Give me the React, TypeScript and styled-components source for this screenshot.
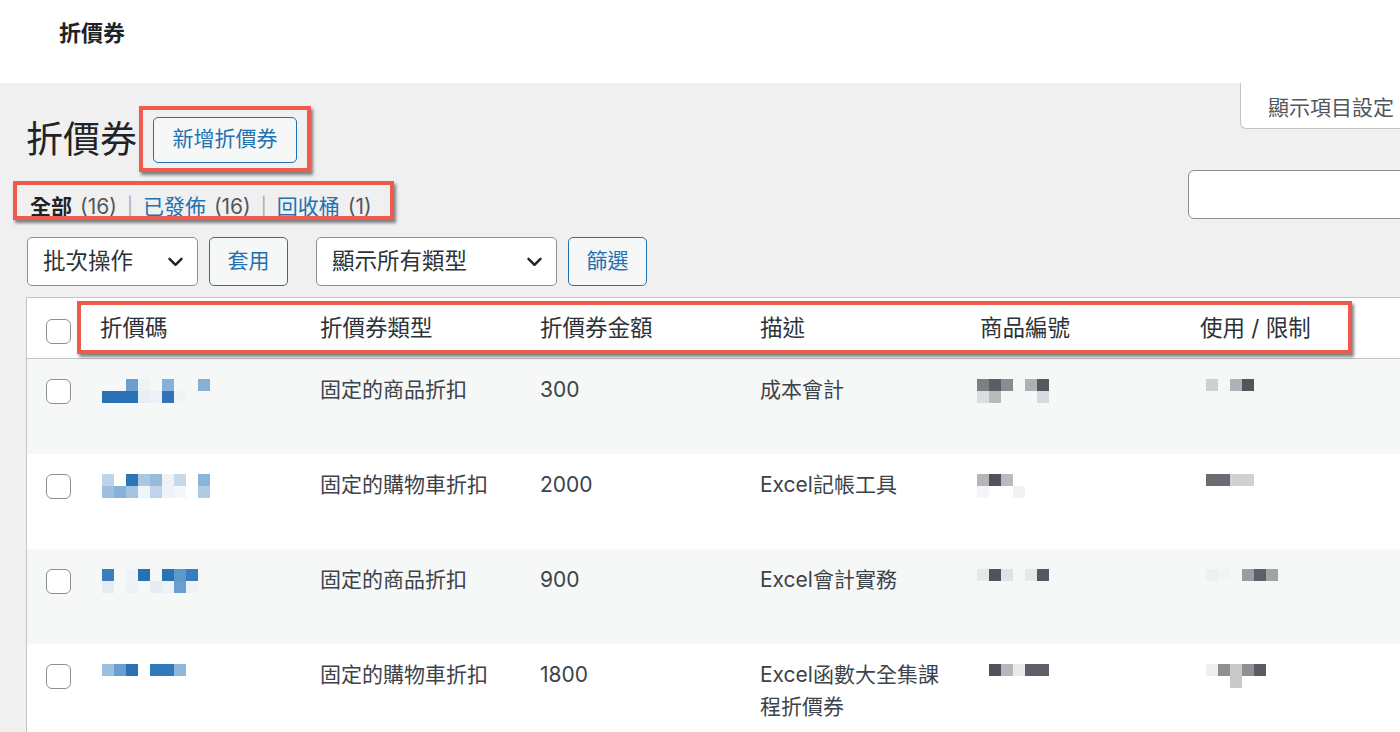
import React from "react";
import styled, { createGlobalStyle } from "styled-components";

const GlobalStyle = createGlobalStyle`
  html, body { margin: 0; padding: 0; }
  body {
    background: #f0f0f1;
    font-family: Inter, "Noto Sans CJK TC", "Noto Sans", sans-serif;
    color: #3c434a;
    overflow: hidden;
  }
  * { box-sizing: border-box; }
`;

const Page = styled.div`
  width: 1400px;
  height: 732px;
  overflow: hidden;
`;

const TopBar = styled.header`
  height: 83px;
  background: #fff;
  padding: 19px 0 0 59px;
`;

const TopTitle = styled.h2`
  margin: 0;
  font-size: 22px;
  line-height: 28px;
  font-weight: 700;
  color: #1d2327;
`;

const Main = styled.main`
  padding-left: 26px;
`;

const HeadArea = styled.div`
  display: flex;
  justify-content: space-between;
`;

const LeftCol = styled.div`
  padding-top: 34px;
  display: flex;
  flex-direction: column;
  align-items: flex-start;
`;

const RightCol = styled.div`
  display: flex;
  flex-direction: column;
  align-items: flex-end;
  margin-right: -40px;
  gap: 41px;
`;

const TitleRow = styled.div`
  display: flex;
  align-items: center;
  gap: 16px;
  height: 46px;
`;

const PageTitle = styled.h1`
  margin: 0;
  font-size: 37px;
  line-height: 46px;
  font-weight: 400;
  color: #1d2327;
`;

const Annotated = styled.div`
  position: relative;
  display: inline-flex;
`;

const Mark = styled.span<{ $t: number; $r: number; $b: number; $l: number }>`
  position: absolute;
  top: ${(p) => p.$t}px;
  right: ${(p) => p.$r}px;
  bottom: ${(p) => p.$b}px;
  left: ${(p) => p.$l}px;
  border: 4px solid #ee5a4e;
  box-shadow: 2px 3px 3px rgba(30, 30, 30, 0.55);
  pointer-events: none;
`;

const HeaderMark = styled.span`
  position: absolute;
  top: 4px;
  left: 51px;
  width: 1275px;
  height: 53px;
  border: 4px solid #ee5a4e;
  box-shadow: 2px 3px 3px rgba(30, 30, 30, 0.55);
  pointer-events: none;
`;

const Button = styled.button<{ $w: number; $h?: number }>`
  width: ${(p) => p.$w}px;
  height: ${(p) => p.$h ?? 49}px;
  border: 1px solid #2271b1;
  border-radius: 5px;
  background: #f6f7f7;
  color: #2271b1;
  font-family: inherit;
  font-size: 21px;
  line-height: 28px;
  padding: 0 0 2px;
  cursor: pointer;
`;

const SubSub = styled.ul`
  margin: 0;
  padding: 0;
  list-style: none;
  display: flex;
  align-items: center;
  font-size: 21px;
  line-height: 30px;
  color: #50575e;
`;

const SubItem = styled.li<{ $current?: boolean }>`
  display: flex;
  gap: 8px;
  white-space: nowrap;
  & > span:first-child {
    color: ${(p) => (p.$current ? "#1d2327" : "#2271b1")};
    font-weight: ${(p) => (p.$current ? 700 : 400)};
  }
`;

const Sep = styled.span`
  color: #a7aaad;
  padding: 0 10px;
  font-size: 18px;
`;

const ScreenTab = styled.div`
  width: 200px;
  height: 46px;
  background: #fff;
  border: 1px solid #c3c4c7;
  border-top: none;
  border-radius: 0 0 0 6px;
  padding-left: 27px;
  display: flex;
  align-items: center;
  font-size: 21px;
  color: #50575e;
`;

const SearchBox = styled.div`
  width: 252px;
  height: 49px;
  border: 1px solid #8c8f94;
  border-radius: 6px;
  background: #fff;
`;

const TableNav = styled.div`
  display: flex;
  align-items: center;
  margin-top: 15px;
  margin-left: 1px;
  height: 49px;
`;

const NavGroup = styled.div<{ $mr: number }>`
  display: flex;
  gap: 11px;
  margin-right: ${(p) => p.$mr}px;
`;

const SelectBox = styled.div<{ $w: number }>`
  width: ${(p) => p.$w}px;
  height: 49px;
  border: 1px solid #8c8f94;
  border-radius: 5px;
  background: #fff;
  display: flex;
  align-items: center;
  justify-content: space-between;
  padding: 0 14px 0 15px;
  font-size: 22.5px;
  color: #2c3338;
  & > span {
    padding-bottom: 5px;
  }
`;

const Chevron = () => (
  <svg width="15" height="10" viewBox="0 0 15 10" fill="none">
    <path d="M1.5 1.8 L7.5 7.8 L13.5 1.8" stroke="#1d2327" strokeWidth="2.4" strokeLinecap="round" strokeLinejoin="round" />
  </svg>
);

const TableWrap = styled.div`
  position: relative;
  margin-top: 11px;
`;

const Table = styled.table`
  border-collapse: separate;
  border-spacing: 0;
  table-layout: fixed;
  width: 1378px;
  border-left: 1px solid #c3c4c7;
  border-top: 1px solid #c3c4c7;
  background: #fff;
`;

const Th = styled.th<{ $check?: boolean }>`
  text-align: left;
  font-weight: 400;
  font-size: 22.5px;
  line-height: 32px;
  color: #2c3338;
  padding: ${(p) => (p.$check ? "21px 0 0 19px" : "14px 16px")};
  width: ${(p) => (p.$check ? "57px" : "220px")};
  height: 60px;
  border-bottom: 1px solid #c3c4c7;
  vertical-align: top;
  white-space: nowrap;
`;

const Row = styled.tr`
  height: 95px;
  &:nth-child(odd) {
    background: #f6f7f7;
  }
`;

const Td = styled.td<{ $check?: boolean }>`
  vertical-align: top;
  padding: ${(p) => (p.$check ? "20px 0 0 19px" : "15px 16px 11px")};
  font-size: 21px;
  line-height: 32px;
  color: #3c434a;
`;

const CheckBox = styled.span`
  display: block;
  width: 25px;
  height: 25px;
  border: 1px solid #8c8f94;
  border-radius: 6px;
  background: #fff;
`;

const MosaicHolder = styled.div<{ $dx: number; $dy: number }>`
  margin: ${(p) => p.$dy}px 0 0 ${(p) => p.$dx}px;
  line-height: 0;
`;

type Grid = string[][];

const Mosaic = ({ grid, dx, dy = 5 }: { grid: Grid; dx: number; dy?: number }) => {
  const cols = Math.max(...grid.map((r) => r.length));
  return (
    <MosaicHolder $dx={dx} $dy={dy}>
      <svg width={cols * 12} height={grid.length * 12}>
        {grid.map((r, y) =>
          r.map((c, x) => (c ? <rect key={`${x}-${y}`} x={x * 12} y={y * 12} width="12" height="12" fill={c} /> : null))
        )}
      </svg>
    </MosaicHolder>
  );
};

type RowData = {
  code: Grid;
  type: string;
  amount: string;
  desc: string;
  product: Grid;
  productDx: number;
  usage: Grid;
};

const rows: RowData[] = [
  {
    code: [
      ["", "", "#6a9fd0", "#eef3f8", "", "#86b2da", "", "", "#88b1d8"],
      ["#2a70b4", "#2a70b4", "#2a70b4", "#e8eef6", "#edf2f7", "#2f74b5", "#f0f4f8", "", ""],
    ],
    type: "固定的商品折扣",
    amount: "300",
    desc: "成本會計",
    product: [
      ["#7d7f85", "#5a5d66", "#8a8c90", "", "#aeb0b3", "#55585f"],
      ["#dcdde0", "#b8bbbe", "", "", "", "#d8dadd"],
    ],
    productDx: -3,
    usage: [["#cfd0d2", "", "#b0b2b6", "#52545e"]],
  },
  {
    code: [
      ["#bcd3e8", "", "#2f74b5", "#a9c6e2", "#98bbdd", "#eef3f8", "#c6d8ea", "", "#8cb4da"],
      ["#9ec0df", "#86b1d8", "#a3c3e1", "#f0f5fa", "#bdd4ea", "#eef3f9", "#f3f7fa", "", "#b1cbe5"],
    ],
    type: "固定的購物車折扣",
    amount: "2000",
    desc: "Excel記帳工具",
    product: [
      ["#b3b5b8", "#50535c", "#b9bbbe"],
      ["#f4f5f7", "", "", "#f2f3f4"],
    ],
    productDx: -3,
    usage: [["#6a6c72", "#6a6c72", "#d0d1d3", "#d0d1d3"]],
  },
  {
    code: [
      ["#3b7dbd", "", "#eef3f8", "#2870b4", "", "#2b72b5", "#5f97cc", "#3a7cbd"],
      ["#e4ebf3", "", "#eef2f6", "", "#e6ecf3", "#eef3f8", "#6a9ed0", "#f0f3f6"],
    ],
    type: "固定的商品折扣",
    amount: "900",
    desc: "Excel會計實務",
    product: [["#e6e7e8", "#50535b", "#e1e2e3", "", "#e6e7e8", "#555860"]],
    productDx: -3,
    usage: [["#eeeff0", "#f3f4f5", "", "#9a9c9f", "#5c5f66", "#a0a2a5"]],
  },
  {
    code: [["#9dbfe0", "#6a9ed0", "#2a70b4", "", "#3079bd", "#3079bd", "#8fb6dc"]],
    type: "固定的購物車折扣",
    amount: "1800",
    desc: "Excel函數大全集課程折價券",
    product: [["", "#50535b", "#b5b7bb", "#e8e9ea", "#5d6068", "#5d6068"]],
    productDx: -3,
    usage: [
      ["#eeeff0", "#8e9094", "#c8c9cb", "#8e9094", "#595c63"],
      ["", "", "#c8c9cb", "", ""],
    ],
  },
];

const columns = ["折價碼", "折價券類型", "折價券金額", "描述", "商品編號", "使用 / 限制"];

export default function App() {
  return (
    <Page>
      <GlobalStyle />
      <TopBar>
        <TopTitle>折價券</TopTitle>
      </TopBar>
      <Main>
        <HeadArea>
          <LeftCol>
            <TitleRow>
              <PageTitle>折價券</PageTitle>
              <Annotated>
                <Button $w={144} $h={46}>新增折價券</Button>
                <Mark $t={-11} $r={-14} $b={-9} $l={-14} />
              </Annotated>
            </TitleRow>
            <Annotated style={{ marginTop: 29, marginLeft: 4 }}>
              <SubSub>
                <SubItem $current>
                  <span>全部</span>
                  <span>(16)</span>
                </SubItem>
                <Sep>|</Sep>
                <SubItem>
                  <span>已發佈</span>
                  <span>(16)</span>
                </SubItem>
                <Sep>|</Sep>
                <SubItem>
                  <span>回收桶</span>
                  <span>(1)</span>
                </SubItem>
              </SubSub>
              <Mark $t={-11} $r={-22} $b={2} $l={-17} />
            </Annotated>
          </LeftCol>
          <RightCol>
            <ScreenTab>顯示項目設定</ScreenTab>
            <SearchBox />
          </RightCol>
        </HeadArea>

        <TableNav>
          <NavGroup $mr={28}>
            <SelectBox $w={171}>
              <span>批次操作</span>
              <Chevron />
            </SelectBox>
            <Button $w={79}>套用</Button>
          </NavGroup>
          <NavGroup $mr={0}>
            <SelectBox $w={241}>
              <span>顯示所有類型</span>
              <Chevron />
            </SelectBox>
            <Button $w={79}>篩選</Button>
          </NavGroup>
        </TableNav>

        <TableWrap>
          <Table>
            <thead>
              <tr>
                <Th $check>
                  <CheckBox />
                </Th>
                {columns.map((c) => (
                  <Th key={c}>{c}</Th>
                ))}
              </tr>
            </thead>
            <tbody>
              {rows.map((r, i) => (
                <Row key={i}>
                  <Td $check>
                    <CheckBox />
                  </Td>
                  <Td>
                    <Mosaic grid={r.code} dx={2} />
                  </Td>
                  <Td>{r.type}</Td>
                  <Td>{r.amount}</Td>
                  <Td>{r.desc}</Td>
                  <Td>
                    <Mosaic grid={r.product} dx={r.productDx} />
                  </Td>
                  <Td>
                    <Mosaic grid={r.usage} dx={6} />
                  </Td>
                </Row>
              ))}
            </tbody>
          </Table>
          <HeaderMark />
        </TableWrap>
      </Main>
    </Page>
  );
}
